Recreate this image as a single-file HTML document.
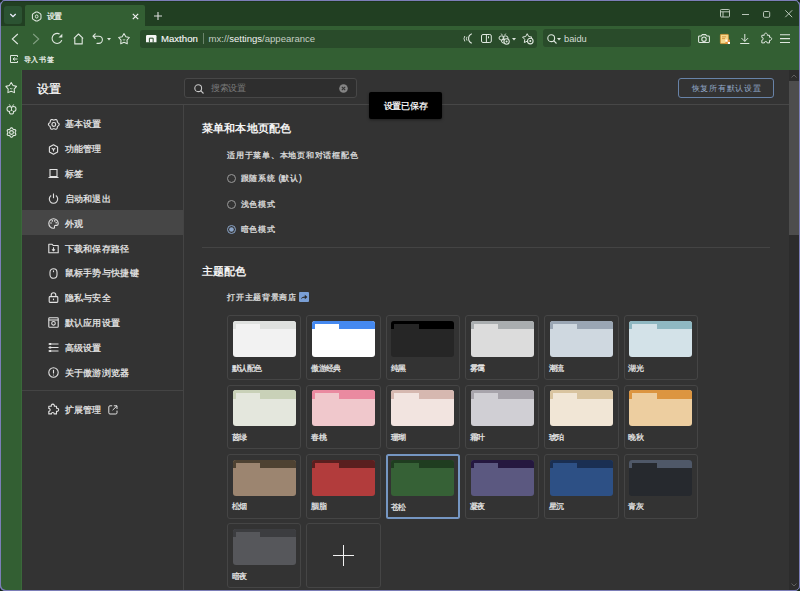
<!DOCTYPE html><html><head><meta charset="utf-8"><style>
*{box-sizing:border-box;margin:0;padding:0}
html,body{width:800px;height:591px;overflow:hidden;background:#7c7eb8}
body{font-family:"Liberation Sans",sans-serif;color:#e6e6e6;position:relative}
.a{position:absolute}
.t{position:absolute;white-space:nowrap;line-height:1}
.s{-webkit-text-stroke-width:0.25px}
svg{position:absolute;overflow:visible}
#win{position:absolute;left:1px;top:1px;width:798px;height:589px;border-radius:5px;overflow:hidden;background:#335f33}
.card{position:absolute;width:74.4px;height:64.5px;border:1px solid #454545;border-radius:3px}
.thumb{position:absolute;left:4.5px;top:4.5px;width:63px;height:36px;border-radius:3px;overflow:hidden}
.band{position:absolute;left:0;top:0;width:100%;height:8.5px}
.tb{position:absolute;left:3px;top:3px;width:24.5px;height:5.5px}
.lb{-webkit-text-stroke-width:0.25px;position:absolute;left:3.9px;top:48.4px;font-size:7.6px;letter-spacing:-0.7px;line-height:1;color:#e8e8e8;white-space:nowrap}
</style></head><body>
<div id="win"></div>
<div class="a" style="left:1px;top:1px;width:798px;height:25px;background:#213f22;border-radius:5px 5px 0 0"></div>
<div class="a" style="left:1px;top:1px;width:798px;height:1px;background:#1b351c"></div>
<div class="a" style="left:4px;top:6px;width:18px;height:18px;background:#2b5332;border-radius:3px"></div>
<svg style="left:9px;top:12.6px" width="8" height="5" viewBox="0 0 8 5"><path d="M1.3 1 L4 3.7 L6.7 1" fill="none" stroke="#eef" stroke-width="1.3"/></svg>
<div class="a" style="left:25px;top:5px;width:120px;height:21px;background:#335f33;border-radius:2px 2px 0 0"></div>
<svg style="left:31px;top:10.5px" width="11" height="11" viewBox="0 0 11 11"><path d="M4.98 0.96 L6.42 0.96 L9.27 2.61 L9.99 3.85 L9.99 7.15 L9.27 8.39 L6.42 10.04 L4.98 10.04 L2.13 8.39 L1.41 7.15 L1.41 3.85 L2.13 2.61 Z" fill="none" stroke="#e2e9e2" stroke-width="1.05" stroke-linejoin="round"/><ellipse cx="5.7" cy="5.5" rx="1.3" ry="1.6" fill="none" stroke="#e2e9e2" stroke-width="1"/></svg>
<div class="t s" style="left:46.7px;top:13.2px;font-size:7.5px;letter-spacing:-0.9px;color:#eef2ee">设置</div>
<svg style="left:132.2px;top:12.5px" width="7" height="7" viewBox="0 0 7 7"><path d="M0.8 0.8 L6.2 6.2 M6.2 0.8 L0.8 6.2" stroke="#f0f0f0" stroke-width="1.2"/></svg>
<svg style="left:154.2px;top:12px" width="8" height="8" viewBox="0 0 8 8"><path d="M4 0 V8 M0 4 H8" stroke="#dcdcdc" stroke-width="1.1"/></svg>
<svg style="left:719.5px;top:8.5px" width="10" height="9" viewBox="0 0 10 9"><rect x="0.5" y="0.5" width="9" height="7.5" rx="0.8" fill="none" stroke="#b9c6b9" stroke-width="1"/><path d="M0.5 2.8 H9.5 M3 2.8 V8" stroke="#b9c6b9" stroke-width="1"/></svg>
<svg style="left:742px;top:13.5px" width="7" height="1" viewBox="0 0 7 1"><path d="M0 0.5 H7" stroke="#b9c6b9" stroke-width="1"/></svg>
<svg style="left:762.5px;top:10.5px" width="7" height="7" viewBox="0 0 7 7"><rect x="0.5" y="0.5" width="6.2" height="5.8" rx="1.2" fill="none" stroke="#b9c6b9" stroke-width="1"/></svg>
<svg style="left:784.5px;top:10px" width="7.5" height="7.5" viewBox="0 0 7.5 7.5"><path d="M0.3 0.3 L7.2 7.2 M7.2 0.3 L0.3 7.2" stroke="#b9c6b9" stroke-width="1"/></svg>
<svg style="left:11px;top:32.5px" width="8" height="12" viewBox="0 0 8 12"><path d="M6.8 1 L1.3 6 L6.8 11" fill="none" stroke="#dfe7df" stroke-width="1.1"/></svg>
<svg style="left:32px;top:32.5px" width="8" height="12" viewBox="0 0 8 12"><path d="M1.2 1 L6.7 6 L1.2 11" fill="none" stroke="#82a082" stroke-width="1.1"/></svg>
<svg style="left:50px;top:31px" width="14" height="14" viewBox="0 0 14 14"><path d="M9.6 3.1 A5 5 0 1 0 11.8 9.1" fill="none" stroke="#dfe7df" stroke-width="1.1"/><path d="M12.3 2.8 L12.3 6.6 L8.5 6.6 Z" fill="#dfe7df"/></svg>
<svg style="left:72.5px;top:32.5px" width="11" height="12" viewBox="0 0 11 12"><path d="M1.2 5.2 L5.5 1 L9.8 5.2 M1.8 4.8 V10.9 H9.2 V4.8" fill="none" stroke="#dfe7df" stroke-width="1.1" stroke-linejoin="round" stroke-linecap="round"/></svg>
<svg style="left:92px;top:32.5px" width="12" height="12" viewBox="0 0 12 12"><path d="M3.3 0.9 L1 3.2 L3.3 5.5 M1 3.2 H6.8 A3.6 3.6 0 0 1 6.8 10.4 H5" fill="none" stroke="#dfe7df" stroke-width="1.1" stroke-linecap="round" stroke-linejoin="round"/></svg>
<svg style="left:107px;top:37.5px" width="4" height="3" viewBox="0 0 4 3"><path d="M0 0 H4 L2 2.5 Z" fill="#dfe7df"/></svg>
<svg style="left:117px;top:31px" width="14" height="14" viewBox="0 0 14 14"><path d="M7.00 2.60 L8.84 5.66 L12.33 6.47 L9.98 9.17 L10.29 12.73 L7.00 11.34 L3.71 12.73 L4.02 9.17 L1.67 6.47 L5.16 5.66 Z" fill="none" stroke="#dfe7df" stroke-width="1.05" stroke-linejoin="round"/><path d="M5.8 8.6 Q7 9.6 8.2 8.6" fill="none" stroke="#dfe7df" stroke-width="0.8"/></svg>
<div class="a" style="left:139.5px;top:29.5px;width:397.5px;height:18px;background:#294b2a;border-radius:3px"></div>
<svg style="left:145.6px;top:34.9px" width="10.5" height="7.2" viewBox="0 0 10.5 7.2"><path d="M0 1.2 Q0 0 1.2 0 H9.3 Q10.5 0 10.5 1.2 V7.2 H0 Z" fill="#f6f6f6"/><path d="M3.4 7.4 V3.2 H7.15 V7.4" fill="none" stroke="#294b2a" stroke-width="1"/></svg>
<div class="t" style="left:161px;top:34px;font-size:9.6px;color:#fafafa;-webkit-text-stroke-width:0.1px">Maxthon</div>
<div class="a" style="left:203px;top:33px;width:1px;height:11px;background:#6b846b"></div>
<div class="t" style="left:208.5px;top:34px;font-size:9.55px;color:#c4cfc4">mx://<span style="color:#f2f2f2">settings</span>/appearance</div>
<svg style="left:461.5px;top:33px" width="11" height="11" viewBox="0 0 11 11"><path d="M9.8 0.7 A5.2 5.2 0 0 0 9.8 10.3" fill="none" stroke="#dfe7df" stroke-width="1.1"/><path d="M5 3.8 Q3.8 5.5 5 7.6 M2.8 3 Q1.2 5.5 2.8 8.4" fill="none" stroke="#dfe7df" stroke-width="0.9"/></svg>
<svg style="left:480.5px;top:33.8px" width="11" height="10" viewBox="0 0 11 10"><rect x="0.5" y="0.5" width="9.8" height="8" rx="1.5" fill="none" stroke="#dfe7df" stroke-width="1"/><path d="M5.4 0.5 V8.5 M7.5 2.3 V4.3" stroke="#dfe7df" stroke-width="1"/></svg>
<svg style="left:497.5px;top:33px" width="12" height="12" viewBox="0 0 12 12"><path d="M3.2 0.6 L4.6 2.4 M7.8 0.6 L6.4 2.4" stroke="#dfe7df" stroke-width="0.9"/><ellipse cx="3.5" cy="5" rx="2.5" ry="2.1" fill="none" stroke="#dfe7df" stroke-width="1"/><ellipse cx="7.5" cy="5" rx="2.5" ry="2.1" fill="none" stroke="#dfe7df" stroke-width="1"/><circle cx="5.5" cy="8" r="2" fill="none" stroke="#dfe7df" stroke-width="1"/><circle cx="8.6" cy="8.5" r="2.7" fill="#294b2a" stroke="#dfe7df" stroke-width="1.1"/><circle cx="8.6" cy="8.5" r="1" fill="#dfe7df"/></svg>
<svg style="left:512px;top:38px" width="4" height="3" viewBox="0 0 4 3"><path d="M0 0 H4 L2 2.5 Z" fill="#dfe7df"/></svg>
<svg style="left:521.5px;top:33px" width="12" height="12" viewBox="0 0 12 12"><path d="M5.20 0.70 L6.70 3.54 L9.86 4.09 L7.62 6.39 L8.08 9.56 L5.20 8.15 L2.32 9.56 L2.78 6.39 L0.54 4.09 L3.70 3.54 Z" fill="none" stroke="#dfe7df" stroke-width="1" stroke-linejoin="round"/><circle cx="8.3" cy="8.1" r="2.8" fill="#294b2a" stroke="#dfe7df" stroke-width="1.1"/><circle cx="8.3" cy="8.1" r="1" fill="#dfe7df"/></svg>
<div class="a" style="left:543px;top:29px;width:148px;height:18px;background:#294b2a;border-radius:3px"></div>
<svg style="left:546.5px;top:33.5px" width="10" height="10" viewBox="0 0 10 10"><circle cx="4.2" cy="4.2" r="3.4" fill="none" stroke="#dfe7df" stroke-width="1.1"/><path d="M6.7 6.7 L9.5 9.5" stroke="#dfe7df" stroke-width="1.1"/></svg>
<svg style="left:557px;top:38px" width="4" height="3" viewBox="0 0 4 3"><path d="M0 0 H4 L2 2.5 Z" fill="#dfe7df"/></svg>
<div class="t" style="left:564px;top:34.7px;font-size:9.3px;color:#d4ddd4">baidu</div>
<svg style="left:697.5px;top:34px" width="12" height="9" viewBox="0 0 12 9"><path d="M1.5 2 H3.3 L4.3 0.6 H7.7 L8.7 2 H10.5 Q11.4 2 11.4 2.9 V7.6 Q11.4 8.4 10.5 8.4 H1.5 Q0.6 8.4 0.6 7.6 V2.9 Q0.6 2 1.5 2 Z" fill="none" stroke="#dfe7df" stroke-width="1.05" stroke-linejoin="round"/><circle cx="6" cy="5.2" r="2.2" fill="none" stroke="#dfe7df" stroke-width="1.1"/></svg>
<svg style="left:719.5px;top:33.5px" width="10" height="10" viewBox="0 0 10 10"><rect x="0.4" y="0.4" width="8" height="9.2" rx="0.6" fill="#f6d88c" stroke="#d9983a" stroke-width="0.8"/><path d="M2 2.8 H6.2 M2 4.6 H5" stroke="#d08a30" stroke-width="0.8"/><rect x="5.4" y="5.6" width="2.3" height="2.2" fill="#fff"/><rect x="7.7" y="7.8" width="2.3" height="2.2" fill="#fff"/><rect x="7.7" y="5.6" width="2.3" height="2.2" fill="#e69038"/><rect x="5.4" y="7.8" width="2.3" height="2.2" fill="#e69038"/></svg>
<svg style="left:740px;top:33.5px" width="10" height="10" viewBox="0 0 10 10"><path d="M4.8 0 V7.3 M1.5 4.1 L4.8 7.4 L8.1 4.1 M0.2 9.5 H9.3" fill="none" stroke="#dfe7df" stroke-width="1"/></svg>
<svg style="left:760.5px;top:33px" width="11" height="11" viewBox="0 0 11 11"><path d="M0.8 2.3 H3.3 A1.6 1.6 0 1 1 6.3 2.3 H8.5 V4.3 A1.6 1.6 0 1 1 8.5 7.3 V9.9 H6.2 A1.4 1.4 0 1 0 3.4 9.9 H0.8 V7.2 A1.4 1.4 0 1 0 0.8 4.4 Z" fill="none" stroke="#dfe7df" stroke-width="1" stroke-linejoin="round"/></svg>
<svg style="left:780px;top:33.5px" width="10" height="9" viewBox="0 0 10 9"><path d="M0 0.8 H10 M0 4.6 H10 M0 8.5 H10" stroke="#dfe7df" stroke-width="1.1"/></svg>
<svg style="left:10px;top:55px" width="8" height="8" viewBox="0 0 8 8"><path d="M7.5 2 V0.5 H0.5 V7.5 H7.5 V6" fill="none" stroke="#dfe7df" stroke-width="1"/><path d="M3 4 H7.5 M4.8 2.5 L3 4 L4.8 5.5" fill="none" stroke="#dfe7df" stroke-width="1"/></svg>
<div class="t s" style="left:23.8px;top:56.7px;font-size:7.1px;letter-spacing:0.6px;color:#eef2ee">导入书签</div>
<svg style="left:4px;top:80px" width="14" height="14" viewBox="0 0 14 14"><path d="M7.20 2.50 L9.04 5.56 L12.53 6.37 L10.18 9.07 L10.49 12.63 L7.20 11.24 L3.91 12.63 L4.22 9.07 L1.87 6.37 L5.36 5.56 Z" fill="none" stroke="#dfe7df" stroke-width="1.05" stroke-linejoin="round"/><path d="M6 8.4 Q7.2 9.4 8.4 8.4" fill="none" stroke="#dfe7df" stroke-width="0.8"/></svg>
<svg style="left:5.5px;top:103.5px" width="11" height="11" viewBox="0 0 11 11"><path d="M3.3 0.4 L4.6 2.4 M7.7 0.4 L6.4 2.4" stroke="#dfe7df" stroke-width="0.9"/><circle cx="3.4" cy="5" r="2.9" fill="#dfe7df"/><circle cx="7.6" cy="5" r="2.9" fill="#dfe7df"/><circle cx="5.5" cy="8" r="2.6" fill="#dfe7df"/><circle cx="3.4" cy="5" r="1.9" fill="#335f33"/><circle cx="7.6" cy="5" r="1.9" fill="#335f33"/><circle cx="5.5" cy="8" r="1.6" fill="#335f33"/><path d="M5.5 4.3 V6.8" stroke="#dfe7df" stroke-width="0.9"/></svg>
<svg style="left:5.5px;top:126.5px" width="11" height="11" viewBox="0 0 11 11"><path d="M9.10 5.50 L9.19 5.89 L9.43 6.33 L9.67 6.86 L9.78 7.41 L9.66 7.90 L9.29 8.25 L8.76 8.43 L8.19 8.48 L7.68 8.51 L7.30 8.62 L7.01 8.89 L6.74 9.32 L6.41 9.79 L5.99 10.16 L5.50 10.30 L5.01 10.16 L4.59 9.79 L4.26 9.32 L3.99 8.89 L3.70 8.62 L3.32 8.51 L2.81 8.48 L2.24 8.43 L1.71 8.25 L1.34 7.90 L1.22 7.41 L1.33 6.86 L1.57 6.33 L1.81 5.89 L1.90 5.50 L1.81 5.11 L1.57 4.67 L1.33 4.14 L1.22 3.59 L1.34 3.10 L1.71 2.75 L2.24 2.57 L2.81 2.52 L3.32 2.49 L3.70 2.38 L3.99 2.11 L4.26 1.68 L4.59 1.21 L5.01 0.84 L5.50 0.70 L5.99 0.84 L6.41 1.21 L6.74 1.68 L7.01 2.11 L7.30 2.38 L7.68 2.49 L8.19 2.52 L8.76 2.57 L9.29 2.75 L9.66 3.10 L9.78 3.59 L9.67 4.14 L9.43 4.67 L9.19 5.11 Z" fill="none" stroke="#dfe7df" stroke-width="1.15" stroke-linejoin="round"/><circle cx="5.5" cy="5.5" r="1.9" fill="none" stroke="#dfe7df" stroke-width="1.15"/></svg>
<div class="a" style="left:21px;top:70px;width:1px;height:520px;background:#3a683a"></div>
<div class="a" style="left:22px;top:70px;width:777px;height:520px;background:#333"></div>
<div class="a" style="left:22px;top:104px;width:767px;height:1px;background:#474747"></div>
<div class="t s" style="left:37.2px;top:83.2px;font-size:12px;color:#fff">设置</div>
<div class="a" style="left:183px;top:105px;width:1px;height:485px;background:#444"></div>
<div class="a" style="left:183.6px;top:78px;width:173.6px;height:19.6px;background:#2e2e2e;border:1px solid #474747;border-radius:3px"></div>
<svg style="left:193.5px;top:83.5px" width="10" height="10" viewBox="0 0 10 10"><circle cx="4.2" cy="4.2" r="3.4" fill="none" stroke="#c8c8c8" stroke-width="1.1"/><path d="M6.7 6.7 L9.5 9.5" stroke="#c8c8c8" stroke-width="1.1"/></svg>
<div class="t" style="left:211.3px;top:84.3px;font-size:8.6px;letter-spacing:-0.45px;color:#7a7a7a">搜索设置</div>
<svg style="left:338.5px;top:83.5px" width="9" height="9" viewBox="0 0 9 9"><circle cx="4.5" cy="4.5" r="4.3" fill="#858585"/><path d="M2.8 2.8 L6.2 6.2 M6.2 2.8 L2.8 6.2" stroke="#333" stroke-width="1.1"/></svg>
<div class="a" style="left:369px;top:92px;width:73px;height:27px;background:#000;border-radius:2px;box-shadow:0 1px 3px rgba(0,0,0,.4)"></div>
<div class="t s" style="left:383.5px;top:102px;font-size:8.6px;letter-spacing:-0.12px;color:#fff">设置已保存</div>
<div class="a" style="left:678px;top:78px;width:96px;height:20px;border:1px solid #6883a8;border-radius:3px"></div>
<div class="t" style="left:691.6px;top:84.2px;font-size:8.4px;letter-spacing:0.74px;color:#93aacb">恢复所有默认设置</div>
<div class="a" style="left:789px;top:70px;width:10px;height:520px;background:#2c2c2c"></div>
<div class="a" style="left:789px;top:81px;width:10px;height:154px;background:#4d4d4d"></div>
<svg style="left:791px;top:74px" width="6" height="4" viewBox="0 0 6 4"><path d="M0.5 3.5 L3 1 L5.5 3.5" fill="none" stroke="#5e5e5e" stroke-width="1"/></svg>
<svg style="left:791px;top:583px" width="6" height="4" viewBox="0 0 6 4"><path d="M0.5 0.5 L3 3 L5.5 0.5" fill="none" stroke="#5e5e5e" stroke-width="1"/></svg>
<div class="a" style="left:22px;top:210px;width:161px;height:25px;background:#464646"></div>
<svg style="left:47.5px;top:118.5px" width="11" height="11" viewBox="0 0 11 11"><path d="M11.20 5.40 L11.07 5.95 L10.71 6.44 L10.25 6.85 L9.82 7.19 L9.52 7.55 L9.36 7.99 L9.28 8.53 L9.16 9.13 L8.91 9.68 L8.50 10.08 L7.95 10.24 L7.35 10.17 L6.77 9.98 L6.26 9.78 L5.80 9.70 L5.34 9.78 L4.83 9.98 L4.25 10.17 L3.65 10.24 L3.10 10.08 L2.69 9.68 L2.44 9.13 L2.32 8.53 L2.24 7.99 L2.08 7.55 L1.78 7.19 L1.35 6.85 L0.89 6.44 L0.53 5.95 L0.40 5.40 L0.53 4.85 L0.89 4.36 L1.35 3.95 L1.78 3.61 L2.08 3.25 L2.24 2.81 L2.32 2.27 L2.44 1.67 L2.69 1.12 L3.10 0.72 L3.65 0.56 L4.25 0.63 L4.83 0.82 L5.34 1.02 L5.80 1.10 L6.26 1.02 L6.77 0.82 L7.35 0.63 L7.95 0.56 L8.50 0.72 L8.91 1.12 L9.16 1.67 L9.28 2.27 L9.36 2.81 L9.52 3.25 L9.82 3.61 L10.25 3.95 L10.71 4.36 L11.07 4.85 Z" fill="none" stroke="#e2e2e2" stroke-width="1.1" stroke-linejoin="round"/><circle cx="5.8" cy="5.4" r="1.9" fill="none" stroke="#e2e2e2" stroke-width="1.15"/></svg>
<div class="t s" style="left:64.6px;top:119.3px;font-size:9.4px;letter-spacing:0.3px;color:#e8e8e8">基本设置</div>
<svg style="left:47.5px;top:143.5px" width="11" height="11" viewBox="0 0 11 11"><path d="M5.5 0.8 L9.6 3.1 L9.6 7.9 L5.5 10.2 L1.4 7.9 L1.4 3.1 Z" fill="none" stroke="#e2e2e2" stroke-width="1.1" stroke-linejoin="round"/><path d="M3.8 4.2 L5.5 5.5 L7.2 4.2 M5.5 5.5 V7.4" fill="none" stroke="#e2e2e2" stroke-width="1.1"/></svg>
<div class="t s" style="left:64.6px;top:144.3px;font-size:9.4px;letter-spacing:0.3px;color:#e8e8e8">功能管理</div>
<svg style="left:47.5px;top:168.3px" width="11" height="11" viewBox="0 0 11 11"><path d="M2 1.5 H9 V8.5 H2 Z M0.5 9.5 H10.5" fill="none" stroke="#e2e2e2" stroke-width="1.1"/></svg>
<div class="t s" style="left:64.6px;top:169.10000000000002px;font-size:9.4px;letter-spacing:0.3px;color:#e8e8e8">标签</div>
<svg style="left:47.5px;top:193.1px" width="11" height="11" viewBox="0 0 11 11"><path d="M3.2 2.5 A4.2 4.2 0 1 0 7.8 2.5" fill="none" stroke="#e2e2e2" stroke-width="1.1"/><path d="M5.5 0.5 V5.2" fill="none" stroke="#e2e2e2" stroke-width="1.1"/></svg>
<div class="t s" style="left:64.6px;top:193.9px;font-size:9.4px;letter-spacing:0.3px;color:#e8e8e8">启动和退出</div>
<svg style="left:47.5px;top:217.9px" width="11" height="11" viewBox="0 0 11 11"><path d="M5.5 0.8 A4.7 4.7 0 0 0 5.5 10.2 Q6.8 10.2 6.5 8.9 Q6.2 7.4 7.7 7.4 H9 Q10.2 7.4 10.2 5.5 A4.7 4.7 0 0 0 5.5 0.8 Z" fill="none" stroke="#e2e2e2" stroke-width="1.1"/><circle cx="3" cy="5" r="0.8" fill="#e2e2e2"/><circle cx="4.3" cy="2.9" r="0.8" fill="#e2e2e2"/><circle cx="6.8" cy="2.9" r="0.8" fill="#e2e2e2"/><circle cx="8.2" cy="4.8" r="0.8" fill="#e2e2e2"/></svg>
<div class="t s" style="left:64.6px;top:218.70000000000002px;font-size:9.4px;letter-spacing:0.3px;color:#e8e8e8">外观</div>
<svg style="left:47.5px;top:242.7px" width="11" height="11" viewBox="0 0 11 11"><path d="M0.8 1.3 H4.2 L5.2 2.5 H10.2 V9.7 H0.8 Z" fill="none" stroke="#e2e2e2" stroke-width="1.1" stroke-linejoin="round"/><path d="M5.5 4.2 V7.8 M4 6.4 L5.5 7.8 L7 6.4" fill="none" stroke="#e2e2e2" stroke-width="1.1"/></svg>
<div class="t s" style="left:64.6px;top:243.5px;font-size:9.4px;letter-spacing:0.3px;color:#e8e8e8">下载和保存路径</div>
<svg style="left:47.5px;top:267.5px" width="11" height="11" viewBox="0 0 11 11"><rect x="2" y="0.7" width="7" height="9.6" rx="3.5" fill="none" stroke="#e2e2e2" stroke-width="1.1"/><path d="M5.5 2.5 V4.2" fill="none" stroke="#e2e2e2" stroke-width="1.1"/></svg>
<div class="t s" style="left:64.6px;top:268.3px;font-size:9.4px;letter-spacing:0.3px;color:#e8e8e8">鼠标手势与快捷键</div>
<svg style="left:47.5px;top:292.3px" width="11" height="11" viewBox="0 0 11 11"><rect x="1.2" y="4.6" width="8.6" height="5.8" rx="0.8" fill="none" stroke="#e2e2e2" stroke-width="1.1"/><path d="M3.2 4.6 V3 A2.3 2.3 0 0 1 7.8 3 V4.6" fill="none" stroke="#e2e2e2" stroke-width="1.1"/><path d="M5.5 6.6 V8.2" fill="none" stroke="#e2e2e2" stroke-width="1.1"/></svg>
<div class="t s" style="left:64.6px;top:293.1px;font-size:9.4px;letter-spacing:0.3px;color:#e8e8e8">隐私与安全</div>
<svg style="left:47.5px;top:317.1px" width="11" height="11" viewBox="0 0 11 11"><rect x="0.8" y="0.8" width="9.4" height="9.4" rx="0.8" fill="none" stroke="#e2e2e2" stroke-width="1.1"/><path d="M0.8 3 H10.2" fill="none" stroke="#e2e2e2" stroke-width="1.1"/><circle cx="5.5" cy="6.3" r="1.8" fill="none" stroke="#e2e2e2" stroke-width="1.1"/></svg>
<div class="t s" style="left:64.6px;top:317.90000000000003px;font-size:9.4px;letter-spacing:0.3px;color:#e8e8e8">默认应用设置</div>
<svg style="left:47.5px;top:341.9px" width="11" height="11" viewBox="0 0 11 11"><path d="M0.5 2 H10.5 M0.5 5.5 H10.5 M0.5 9 H10.5" fill="none" stroke="#e2e2e2" stroke-width="1.1"/><path d="M1.2 1 H3.2 V3 H1.2 Z M1.2 4.5 H3.2 V6.5 H1.2 Z M1.2 8 H3.2 V10 H1.2 Z" fill="#e2e2e2"/></svg>
<div class="t s" style="left:64.6px;top:342.7px;font-size:9.4px;letter-spacing:0.3px;color:#e8e8e8">高级设置</div>
<svg style="left:47.5px;top:366.7px" width="11" height="11" viewBox="0 0 11 11"><circle cx="5.5" cy="5.5" r="4.7" fill="none" stroke="#e2e2e2" stroke-width="1.1"/><path d="M5.5 2.8 V6.5" fill="none" stroke="#e2e2e2" stroke-width="1.1"/><circle cx="5.5" cy="8" r="0.6" fill="#e2e2e2"/></svg>
<div class="t s" style="left:64.6px;top:367.5px;font-size:9.4px;letter-spacing:0.3px;color:#e8e8e8">关于傲游浏览器</div>
<div class="a" style="left:22px;top:389.8px;width:161px;height:1px;background:#444"></div>
<svg style="left:47.5px;top:404px" width="11" height="11" viewBox="0 0 11 11"><path d="M0.8 2.3 H3.3 A1.6 1.6 0 1 1 6.3 2.3 H8.5 V4.3 A1.6 1.6 0 1 1 8.5 7.3 V9.9 H6.2 A1.4 1.4 0 1 0 3.4 9.9 H0.8 V7.2 A1.4 1.4 0 1 0 0.8 4.4 Z" fill="none" stroke="#e2e2e2" stroke-width="1.1" stroke-linejoin="round"/></svg>
<div class="t s" style="left:64.6px;top:404.8px;font-size:9.4px;letter-spacing:0.3px;color:#e8e8e8">扩展管理</div>
<svg style="left:107.5px;top:405px" width="10" height="10" viewBox="0 0 10 10"><path d="M4.2 0.8 H2 Q0.8 0.8 0.8 2 V7.8 Q0.8 9 2 9 H7.8 Q9 9 9 7.8 V5.6" fill="none" stroke="#e2e2e2" stroke-width="1"/><path d="M5.8 0.8 H9 V4 M9 0.8 L4.6 5.2" fill="none" stroke="#e2e2e2" stroke-width="1"/></svg>
<div class="t" style="left:202px;top:123.3px;font-size:11.1px;font-weight:bold;letter-spacing:0.14px;color:#f4f4f4">菜单和本地页配色</div>
<div class="t s" style="left:227px;top:150.6px;font-size:8.45px;letter-spacing:0.77px;color:#e0e0e0">适用于菜单、本地页和对话框配色</div>
<svg style="left:226.5px;top:174.2px" width="9" height="9" viewBox="0 0 9 9"><circle cx="4.5" cy="4.5" r="4" fill="none" stroke="#9a9a9a" stroke-width="1"/></svg>
<div class="t s" style="left:240.6px;top:174.39999999999998px;font-size:8.3px;letter-spacing:0.9px;color:#e0e0e0">跟随系统<span style="letter-spacing:0"> (</span>默认<span style="letter-spacing:0">)</span></div>
<svg style="left:226.5px;top:199.5px" width="9" height="9" viewBox="0 0 9 9"><circle cx="4.5" cy="4.5" r="4" fill="none" stroke="#9a9a9a" stroke-width="1"/></svg>
<div class="t s" style="left:240.6px;top:199.7px;font-size:8.3px;letter-spacing:0.9px;color:#e0e0e0">浅色模式</div>
<svg style="left:226.5px;top:224.5px" width="9" height="9" viewBox="0 0 9 9"><circle cx="4.5" cy="4.5" r="4" fill="none" stroke="#8aa4c8" stroke-width="1"/><circle cx="4.5" cy="4.5" r="2.3" fill="#8aa4c8"/></svg>
<div class="t s" style="left:240.6px;top:224.7px;font-size:8.3px;letter-spacing:0.9px;color:#e0e0e0">暗色模式</div>
<div class="a" style="left:202px;top:247px;width:568px;height:1px;background:#444"></div>
<div class="t" style="left:202.3px;top:266px;font-size:11.1px;font-weight:bold;color:#f4f4f4">主题配色</div>
<div class="t s" style="left:227.4px;top:292.6px;font-size:8.33px;letter-spacing:0.64px;color:#e0e0e0">打开主题背景商店</div>
<svg style="left:299px;top:292px" width="10" height="10" viewBox="0 0 10 10"><rect width="10" height="10" rx="1" fill="#7a9fd5"/><path d="M2 7.2 Q2.6 4.4 5.8 4.4 V2.8 L8.4 5 L5.8 7.2 V5.8 Q3.5 5.6 2 7.2 Z" fill="#2a2a2a"/></svg>
<div class="card" style="left:227.10px;top:315.40px;"><div class="thumb" style="background:#f2f2f2;"><div class="band" style="background:#dfe1df"></div><div class="tb" style="background:#f2f2f2"></div></div><div class="lb" style="">默认配色</div></div>
<div class="card" style="left:306.40px;top:315.40px;"><div class="thumb" style="background:#ffffff;"><div class="band" style="background:#4589f0"></div><div class="tb" style="background:#ffffff"></div></div><div class="lb" style="">傲游经典</div></div>
<div class="card" style="left:385.70px;top:315.40px;"><div class="thumb" style="background:#262626;"><div class="band" style="background:#000000"></div><div class="tb" style="background:#262626"></div></div><div class="lb" style="">纯黑</div></div>
<div class="card" style="left:465.00px;top:315.40px;"><div class="thumb" style="background:#dcdcdc;"><div class="band" style="background:#a9adaf"></div><div class="tb" style="background:#dcdcdc"></div></div><div class="lb" style="">雾霭</div></div>
<div class="card" style="left:544.30px;top:315.40px;"><div class="thumb" style="background:#cfd8e0;"><div class="band" style="background:#9aa6b4"></div><div class="tb" style="background:#cfd8e0"></div></div><div class="lb" style="">潮流</div></div>
<div class="card" style="left:623.60px;top:315.40px;"><div class="thumb" style="background:#d3e2e8;"><div class="band" style="background:#8fb8c2"></div><div class="tb" style="background:#d3e2e8"></div></div><div class="lb" style="">湖光</div></div>
<div class="card" style="left:227.10px;top:384.70px;"><div class="thumb" style="background:#e4e7dd;"><div class="band" style="background:#c9d1b8"></div><div class="tb" style="background:#e4e7dd"></div></div><div class="lb" style="">茵绿</div></div>
<div class="card" style="left:306.40px;top:384.70px;"><div class="thumb" style="background:#f0c8cc;"><div class="band" style="background:#ea8aa0"></div><div class="tb" style="background:#f0c8cc"></div></div><div class="lb" style="">春桃</div></div>
<div class="card" style="left:385.70px;top:384.70px;"><div class="thumb" style="background:#f2e4e0;"><div class="band" style="background:#d6b8b0"></div><div class="tb" style="background:#f2e4e0"></div></div><div class="lb" style="">珊瑚</div></div>
<div class="card" style="left:465.00px;top:384.70px;"><div class="thumb" style="background:#d0cfd4;"><div class="band" style="background:#a7a4ab"></div><div class="tb" style="background:#d0cfd4"></div></div><div class="lb" style="">霜叶</div></div>
<div class="card" style="left:544.30px;top:384.70px;"><div class="thumb" style="background:#f1e6d6;"><div class="band" style="background:#d9c4a0"></div><div class="tb" style="background:#f1e6d6"></div></div><div class="lb" style="">琥珀</div></div>
<div class="card" style="left:623.60px;top:384.70px;"><div class="thumb" style="background:#edcea0;"><div class="band" style="background:#dc9540"></div><div class="tb" style="background:#edcea0"></div></div><div class="lb" style="">晚秋</div></div>
<div class="card" style="left:227.10px;top:454.00px;"><div class="thumb" style="background:#9c8570;"><div class="band" style="background:#4e4232"></div><div class="tb" style="background:#9c8570"></div></div><div class="lb" style="">松烟</div></div>
<div class="card" style="left:306.40px;top:454.00px;"><div class="thumb" style="background:#b23c3c;"><div class="band" style="background:#5a1f1f"></div><div class="tb" style="background:#b23c3c"></div></div><div class="lb" style="">胭脂</div></div>
<div class="card" style="left:385.70px;top:454.00px;border:2px solid #7596c2;border-radius:2.5px;"><div class="thumb" style="background:#366136;left:3.5px;top:3.5px;"><div class="band" style="background:#1f3d20"></div><div class="tb" style="background:#366136"></div></div><div class="lb" style="left:2.9px;top:48px;">苍松</div></div>
<div class="card" style="left:465.00px;top:454.00px;"><div class="thumb" style="background:#5b5880;"><div class="band" style="background:#25183f"></div><div class="tb" style="background:#5b5880"></div></div><div class="lb" style="">凝夜</div></div>
<div class="card" style="left:544.30px;top:454.00px;"><div class="thumb" style="background:#2d5085;"><div class="band" style="background:#1a2f52"></div><div class="tb" style="background:#2d5085"></div></div><div class="lb" style="">星沉</div></div>
<div class="card" style="left:623.60px;top:454.00px;"><div class="thumb" style="background:#26292e;"><div class="band" style="background:#4f5868"></div><div class="tb" style="background:#26292e"></div></div><div class="lb" style="">青灰</div></div>
<div class="card" style="left:227.10px;top:523.30px;"><div class="thumb" style="background:#56575b;"><div class="band" style="background:#3c3d40"></div><div class="tb" style="background:#56575b"></div></div><div class="lb" style="">暗夜</div></div>
<div class="card" style="left:306.40px;top:523.30px"></div>
<svg style="left:333.40px;top:544.80px" width="21" height="21" viewBox="0 0 21 21"><path d="M10.5 0 V21 M0 10.5 H21" stroke="#f2f2f2" stroke-width="1"/></svg>
<div class="a" style="left:0;top:0;width:800px;height:591px;border:1px solid #7c7eb8;border-radius:5px;box-shadow:0 0 0 8px #16281a;pointer-events:none"></div>
</body></html>
